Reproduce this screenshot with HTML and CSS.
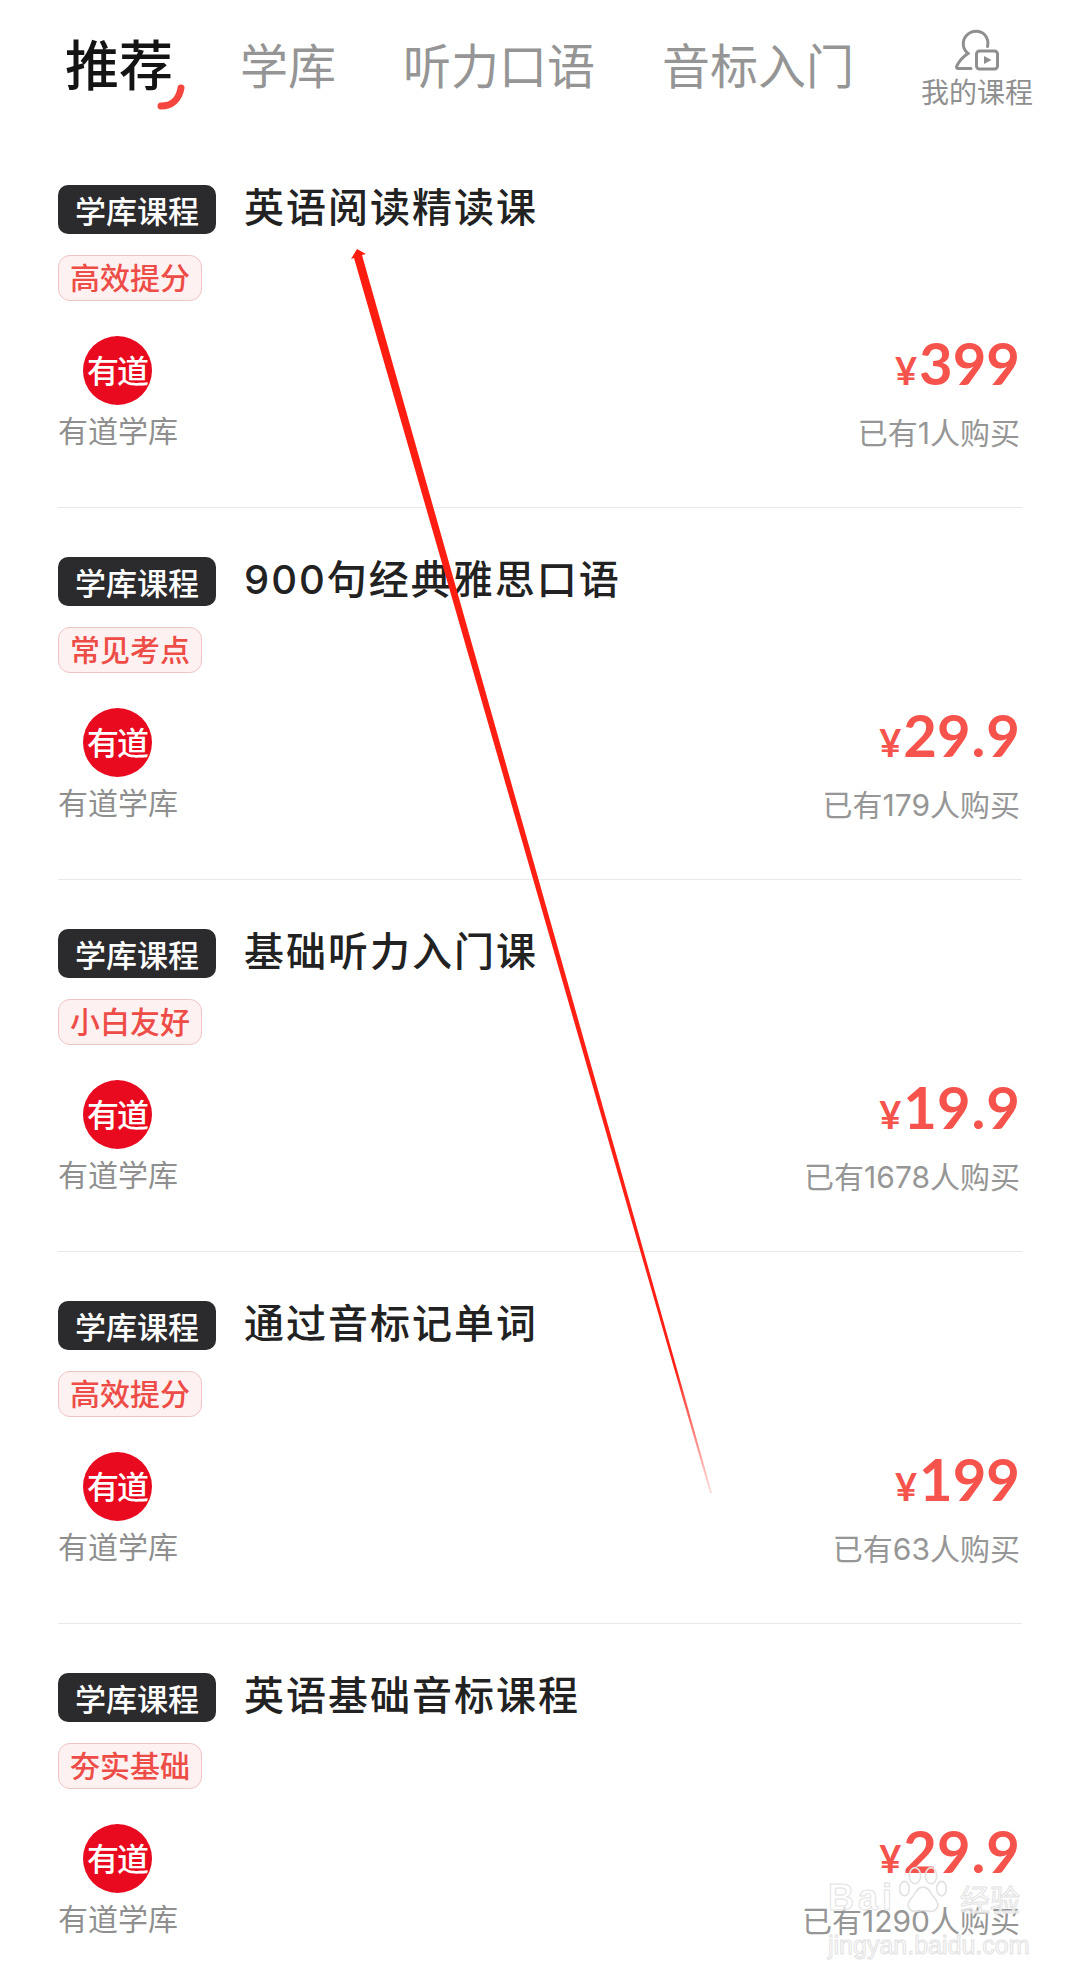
FILE: index.html
```html
<!DOCTYPE html>
<html lang="zh-CN">
<head>
<meta charset="utf-8">
<title>课程</title>
<link rel="stylesheet" href="styles.css">
</head>
<body>
<div class="page">
  <header class="tabs">
    <div class="tab tab-active">推荐
      <svg class="swoosh" width="30" height="30" viewBox="0 0 30 30"><path d="M4 25 C14 25 22 19 24 7" fill="none" stroke="#f4463f" stroke-width="7" stroke-linecap="round"/></svg>
    </div>
    <div class="tab">学库</div>
    <div class="tab">听力口语</div>
    <div class="tab">音标入门</div>
    <div class="my">
      <svg class="my-icon" width="46" height="44" viewBox="0 0 46 44"><path d="M17 40.5 H4.5 Q1.5 40.5 3 37.5 Q6.5 30.5 14 25.5 C8.5 21 7.5 13 12.5 7.5 C18 1.5 28 2 32 8.5 C34 12 34.5 15 33.5 18.5" fill="none" stroke="#8f8f8f" stroke-width="3" stroke-linecap="round"/><rect x="22.5" y="23" width="21" height="18" rx="3" fill="none" stroke="#8f8f8f" stroke-width="3"/><path d="M30 28 L37.5 32 L30 36 Z" fill="#8f8f8f"/></svg>
      <span class="my-label">我的课程</span>
    </div>
  </header>

  <main class="list">
    <article class="card">
      <div class="head"><span class="kind">学库课程</span><h2 class="title">英语阅读精读课</h2></div>
      <div class="label-row"><span class="label">高效提分</span></div>
      <div class="foot">
        <div class="pub"><span class="logo">有道</span><span class="pub-name">有道学库</span></div>
        <div class="buy"><div class="price"><span class="yen">¥</span>399</div><div class="sold">已有1人购买</div></div>
      </div>
    </article>
    <article class="card">
      <div class="head"><span class="kind">学库课程</span><h2 class="title">900句经典雅思口语</h2></div>
      <div class="label-row"><span class="label">常见考点</span></div>
      <div class="foot">
        <div class="pub"><span class="logo">有道</span><span class="pub-name">有道学库</span></div>
        <div class="buy"><div class="price"><span class="yen">¥</span>29<span class="dot">.</span>9</div><div class="sold">已有179人购买</div></div>
      </div>
    </article>
    <article class="card">
      <div class="head"><span class="kind">学库课程</span><h2 class="title">基础听力入门课</h2></div>
      <div class="label-row"><span class="label">小白友好</span></div>
      <div class="foot">
        <div class="pub"><span class="logo">有道</span><span class="pub-name">有道学库</span></div>
        <div class="buy"><div class="price"><span class="yen">¥</span>19<span class="dot">.</span>9</div><div class="sold">已有1678人购买</div></div>
      </div>
    </article>
    <article class="card">
      <div class="head"><span class="kind">学库课程</span><h2 class="title">通过音标记单词</h2></div>
      <div class="label-row"><span class="label">高效提分</span></div>
      <div class="foot">
        <div class="pub"><span class="logo">有道</span><span class="pub-name">有道学库</span></div>
        <div class="buy"><div class="price"><span class="yen">¥</span>199</div><div class="sold">已有63人购买</div></div>
      </div>
    </article>
    <article class="card">
      <div class="head"><span class="kind">学库课程</span><h2 class="title">英语基础音标课程</h2></div>
      <div class="label-row"><span class="label">夯实基础</span></div>
      <div class="foot">
        <div class="pub"><span class="logo">有道</span><span class="pub-name">有道学库</span></div>
        <div class="buy"><div class="price"><span class="yen">¥</span>29<span class="dot">.</span>9</div><div class="sold">已有1290人购买</div></div>
      </div>
    </article>
  </main>

  <svg class="arrow" width="1080" height="1980" viewBox="0 0 1080 1980">
    <defs>
      <linearGradient id="fade" gradientUnits="userSpaceOnUse" x1="357" y1="249" x2="711" y2="1493">
        <stop offset="0" stop-color="#ff1d10"/>
        <stop offset="0.9" stop-color="#ff2015"/>
        <stop offset="1" stop-color="#ff2015" stop-opacity="0.15"/>
      </linearGradient>
    </defs>
    <polygon points="357,249 366,254 362,255 712,1493 710,1493 354,258 351,259" fill="url(#fade)"/>
  </svg>

  <div class="mark">
    <div class="mark-top">
      <span class="mark-bai">Bai</span>
      <svg class="paw" width="60" height="50" viewBox="0 0 60 62"><g fill="none" stroke="#e2e2e2" stroke-width="2"><ellipse cx="20" cy="12" rx="7" ry="10"/><ellipse cx="40" cy="12" rx="7" ry="10"/><ellipse cx="7" cy="28" rx="6" ry="9"/><ellipse cx="53" cy="28" rx="6" ry="9"/><path d="M30 26 C22 26 20 36 14 42 C8 50 14 58 24 56 C28 55 32 55 36 56 C46 58 52 50 46 42 C40 36 38 26 30 26 Z"/></g></svg>
      <span class="mark-cn">经验</span>
    </div>
    <div class="mark-url">jingyan.baidu.com</div>
  </div>
</div>
</body>
</html>
```

FILE: styles.css
```css
* { box-sizing: border-box; }
html, body { margin: 0; padding: 0; background: #fff; }
body { font-family: "Noto Sans CJK SC", "Noto Sans", sans-serif; }

.page {
  position: relative;
  width: 1080px;
  height: 1980px;
  overflow: hidden;
}

.tabs {
  display: flex;
  align-items: flex-start;
  gap: 67px;
  height: 136px;
  padding: 26px 0 0 65px;
}
.tab {
  position: relative;
  font-size: 48px;
  line-height: 74px;
  color: #959595;
}
.tab-active {
  font-size: 54px;
  font-weight: 500;
  color: #141414;
}
.swoosh {
  position: absolute;
  left: 92px;
  top: 55px;
}
.my {
  display: flex;
  flex-direction: column;
  align-items: center;
  margin-top: 2px;
}
.my-icon { display: block; }
.my-label {
  font-size: 28px;
  line-height: 36px;
  margin-top: 1px;
  color: #8f8f8f;
}

.list { padding: 0 58px; }
.card {
  display: flex;
  flex-direction: column;
  height: 372px;
  padding-top: 49px;
  border-bottom: 1px solid #e9e9e9;
}
.head {
  display: flex;
  align-items: flex-start;
  gap: 28px;
}
.kind {
  width: 158px;
  height: 49px;
  border-radius: 10px;
  background: #2b2b2e;
  color: #fff;
  font-size: 31px;
  font-weight: 500;
  line-height: 49px;
  text-align: center;
}
.title {
  margin: -1px 0 0;
  font-family: "Inter", "Noto Sans CJK SC", sans-serif;
  font-size: 40px;
  font-weight: 500;
  line-height: 48px;
  letter-spacing: 2px;
  color: #222;
}
.label-row { display: flex; margin-top: 21px; }
.label {
  width: 144px;
  height: 46px;
  border: 1px solid #f3c3c3;
  border-radius: 12px;
  background: #fdf1f1;
  color: #ee4d47;
  font-size: 30px;
  font-weight: 500;
  line-height: 41px;
  text-align: center;
}
.foot {
  display: flex;
  justify-content: space-between;
  align-items: flex-start;
  margin-top: 35px;
}
.pub {
  display: flex;
  flex-direction: column;
  align-items: center;
}
.logo {
  width: 69px;
  height: 69px;
  margin-left: -2px;
  border-radius: 50%;
  background: #ea0a20;
  color: #fff;
  font-size: 32px;
  font-weight: 500;
  line-height: 67px;
  text-align: center;
  letter-spacing: -2px;
}
.pub-name {
  margin-top: 2px;
  font-size: 30px;
  line-height: 44px;
  color: #8f8f8f;
}
.buy {
  display: flex;
  flex-direction: column;
  align-items: flex-end;
  padding-right: 2px;
}
.price {
  margin-top: -8px;
  font-family: "Lato", "Noto Sans", sans-serif;
  font-size: 58px;
  font-weight: 700;
  line-height: 70px;
  color: #f5534b;
}
.yen {
  font-size: 38px;
  font-weight: 700;
  margin-right: 2px;
}
.dot { margin: 0 1px; }
.sold {
  margin-top: 6px;
  font-family: "Inter", "Noto Sans CJK SC", sans-serif;
  font-size: 30px;
  line-height: 44px;
  color: #969696;
}

.arrow {
  position: absolute;
  left: 0;
  top: 0;
  pointer-events: none;
}

.mark {
  position: absolute;
  left: 828px;
  top: 1870px;
  width: 192px;
  color: rgba(255, 255, 255, 0.7);
  -webkit-text-stroke: 1px #e2e2e2;
  font-family: "Liberation Sans", sans-serif;
}
.mark-top {
  position: relative;
  display: flex;
  justify-content: space-between;
  align-items: flex-end;
  height: 50px;
  font-size: 36px;
  font-weight: 700;
  line-height: 44px;
}
.mark-bai { letter-spacing: 4px; }
.paw {
  position: absolute;
  left: 65px;
  top: -4px;
}
.mark-cn {
  font-family: "Noto Sans CJK SC", sans-serif;
  font-size: 30px;
  font-weight: 400;
}
.mark-url {
  font-size: 25px;
  line-height: 34px;
  margin-top: 8px;
  white-space: nowrap;
}
```
